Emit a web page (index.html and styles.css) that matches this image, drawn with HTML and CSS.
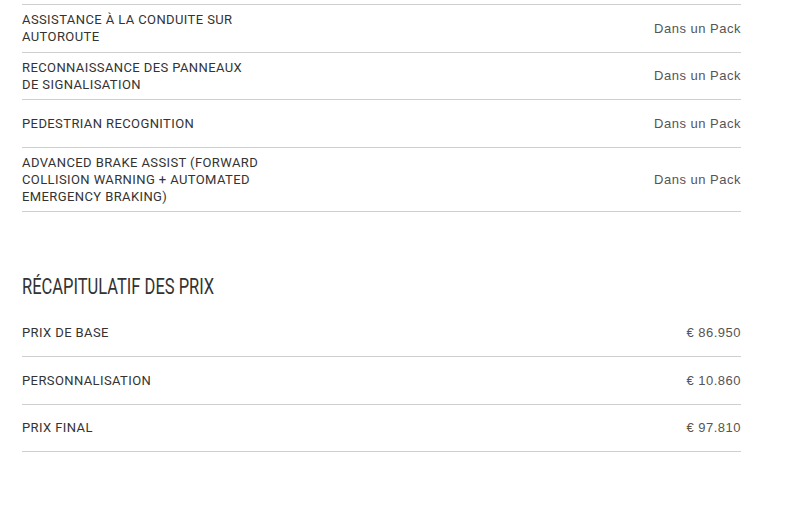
FILE: index.html
```html
<!DOCTYPE html>
<html lang="fr">
<head>
<meta charset="utf-8">
<link rel="stylesheet" href="styles.css">
</head>
<body>
<main class="page">
  <section class="specs">
    <div class="row">
      <div class="label">ASSISTANCE À LA CONDUITE SUR<br>AUTOROUTE</div>
      <div class="value">Dans un Pack</div>
    </div>
    <div class="row">
      <div class="label">RECONNAISSANCE DES PANNEAUX<br>DE SIGNALISATION</div>
      <div class="value">Dans un Pack</div>
    </div>
    <div class="row">
      <div class="label">PEDESTRIAN RECOGNITION</div>
      <div class="value value-clipped"><span>Dans un Pack</span></div>
    </div>
    <div class="row">
      <div class="label">ADVANCED BRAKE ASSIST (FORWARD<br>COLLISION WARNING + AUTOMATED<br>EMERGENCY BRAKING)</div>
      <div class="value">Dans un Pack</div>
    </div>
  </section>
  <section class="summary">
    <h2 class="summary-title">RÉCAPITULATIF DES PRIX</h2>
    <div class="price-row">
      <div class="label">PRIX DE BASE</div>
      <div class="value">€ 86.950</div>
    </div>
    <div class="price-row">
      <div class="label">PERSONNALISATION</div>
      <div class="value">€ 10.860</div>
    </div>
    <div class="price-row">
      <div class="label">PRIX FINAL</div>
      <div class="value">€ 97.810</div>
    </div>
  </section>
</main>
</body>
</html>
```
FILE: styles.css
```css
html, body {
  margin: 0;
  padding: 0;
  background: #fff;
}
.page {
  width: 719px;
  margin-left: 22px;
  padding-top: 4px;
}
.specs {
  border-top: 1px solid #cfcfcf;
}
.row {
  display: flex;
  align-items: center;
  justify-content: space-between;
  min-height: 47.5px;
  padding: 6px 0;
  box-sizing: border-box;
  border-bottom: 1px solid #cfcfcf;
}
.label {
  font-family: "Roboto", sans-serif;
  font-size: 13px;
  line-height: 17px;
  letter-spacing: 0.4px;
  color: #333;
}
.value {
  font-family: "Liberation Sans", Arial, sans-serif;
  font-size: 13px;
  line-height: 17px;
  letter-spacing: 0.5px;
  color: #555;
}
.value-clipped {
  height: 10px;
  overflow: hidden;
}
.value-clipped span {
  display: block;
  margin-top: -3px;
}
.summary {
  padding-top: 62px;
}
.summary-title {
  margin: 0 0 10px;
  font-family: "Roboto", sans-serif;
  font-weight: 400;
  font-size: 22px;
  line-height: 26px;
  color: #333;
  transform: scaleX(0.75);
  transform-origin: left center;
  white-space: nowrap;
}
.price-row {
  display: flex;
  align-items: center;
  justify-content: space-between;
  height: 47.5px;
  box-sizing: border-box;
  border-bottom: 1px solid #cfcfcf;
}
```
